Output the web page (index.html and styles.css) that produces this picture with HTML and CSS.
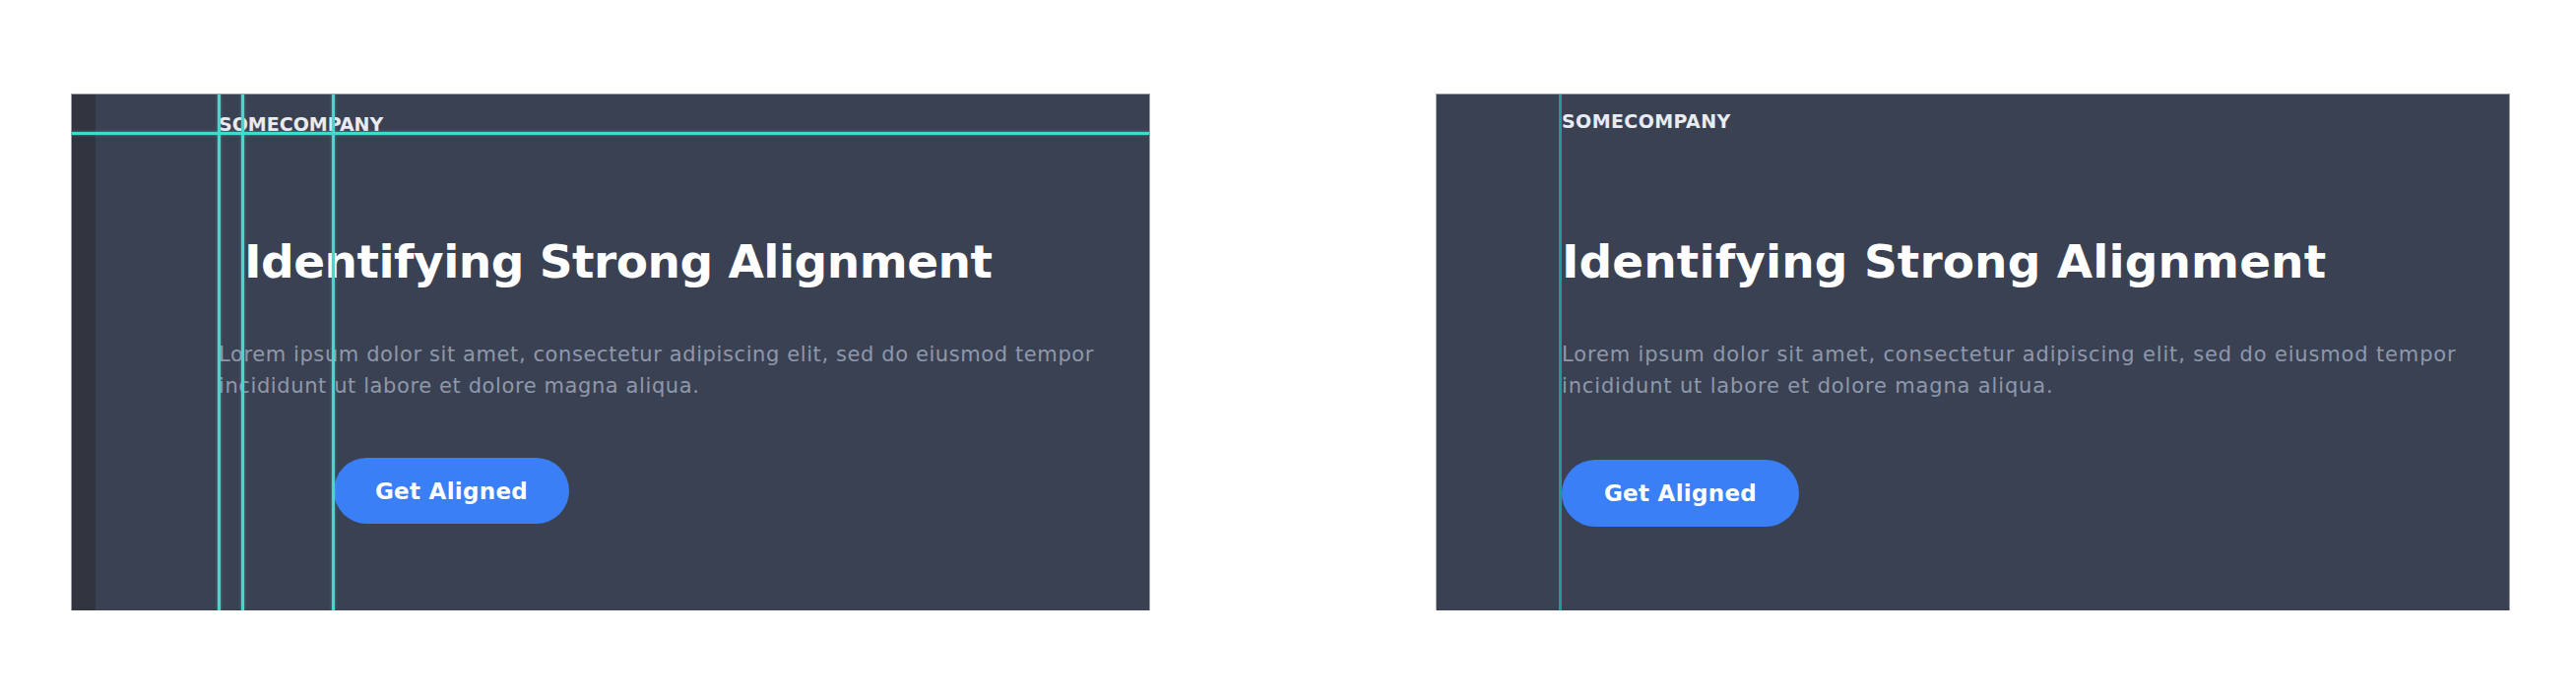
FILE: index.html
```html
<!DOCTYPE html>
<html lang="en">
<head>
<meta charset="utf-8">
<title>Identifying Strong Alignment</title>
<link rel="stylesheet" href="styles.css">
</head>
<body>
<main class="stage">
  <section class="frame frame--misaligned">
    <div class="frame-sidebar"></div>
    <div class="frame-page">
      <div class="brand">SOMECOMPANY</div>
      <h1 class="hero-title">Identifying Strong Alignment</h1>
      <p class="hero-text">Lorem ipsum dolor sit amet, consectetur adipiscing elit, sed do eiusmod tempor<br>incididunt ut labore et dolore magna aliqua.</p>
      <a class="hero-btn">Get Aligned</a>
    </div>
    <div class="guide guide--h"></div>
    <div class="guide guide--v guide--v1"></div>
    <div class="guide guide--v guide--v2"></div>
    <div class="guide guide--v guide--v3"></div>
  </section>
  <section class="frame frame--aligned">
    <div class="frame-page">
      <div class="brand">SOMECOMPANY</div>
      <h1 class="hero-title">Identifying Strong Alignment</h1>
      <p class="hero-text">Lorem ipsum dolor sit amet, consectetur adipiscing elit, sed do eiusmod tempor<br>incididunt ut labore et dolore magna aliqua.</p>
      <a class="hero-btn">Get Aligned</a>
    </div>
    <div class="guide guide--v guide--dark"></div>
  </section>
</main>
</body>
</html>
```
FILE: styles.css
```css
html, body {
  margin: 0;
  background: #ffffff;
}

body {
  font-family: "DejaVu Sans", Inter, sans-serif;
}

.stage {
  display: flex;
  align-items: flex-start;
  gap: 292px;
  padding: 96px 0 0 73px;
}

.frame {
  position: relative;
  display: flex;
  height: 524px;
  background: #3a4153;
  box-shadow: 0 0 0 1px rgba(70, 76, 90, 0.55);
  overflow: hidden;
}

.frame--misaligned {
  width: 1094px;
}

.frame--aligned {
  width: 1089px;
}

.frame-sidebar {
  flex: none;
  width: 24px;
  background: #30353f;
}

.frame-page {
  display: flex;
  flex-direction: column;
  align-items: flex-start;
  padding: 15px 0 0 125px;
}

.frame--aligned .frame-page {
  padding-left: 127px;
}

.brand {
  font-size: 19px;
  line-height: 24px;
  font-weight: 700;
  color: #e8ebf1;
  letter-spacing: 0.4px;
}

.frame--misaligned .brand {
  margin-top: 3px;
  letter-spacing: 0;
}

.hero-title {
  margin: 102px 0 0;
  font-size: 47px;
  line-height: 58px;
  font-weight: 700;
  color: #ffffff;
  letter-spacing: 0.1px;
}

.frame--misaligned .hero-title {
  margin-top: 99px;
  margin-left: 26px;
  letter-spacing: -0.5px;
}

.hero-text {
  margin: 49px 0 0;
  font-size: 21px;
  line-height: 32px;
  color: #8f98aa;
  letter-spacing: 0.85px;
}

.frame--misaligned .hero-text {
  letter-spacing: 0.6px;
}

.hero-btn {
  display: flex;
  align-items: center;
  justify-content: center;
  margin-top: 59px;
  width: 241px;
  height: 68px;
  border-radius: 34px;
  background: #3b7ff6;
  color: #ffffff;
  font-size: 23px;
  font-weight: 700;
  letter-spacing: 0.3px;
}

.frame--misaligned .hero-btn {
  margin-top: 57px;
  margin-left: 117px;
  width: 239px;
  height: 67px;
}

.guide {
  position: absolute;
  background: #3fdccd;
  box-shadow: 0 0 3px rgba(63, 220, 205, 0.6);
}

.guide--h {
  left: 0;
  right: 0;
  top: 38px;
  height: 3px;
}

.guide--v {
  top: 0;
  bottom: 0;
  width: 3px;
}

.guide--v1 {
  left: 148px;
}

.guide--v2 {
  left: 172px;
}

.guide--v3 {
  left: 264px;
}

.guide--dark {
  left: 124px;
  width: 3px;
  background: #1f9a95;
  box-shadow: none;
}
```
